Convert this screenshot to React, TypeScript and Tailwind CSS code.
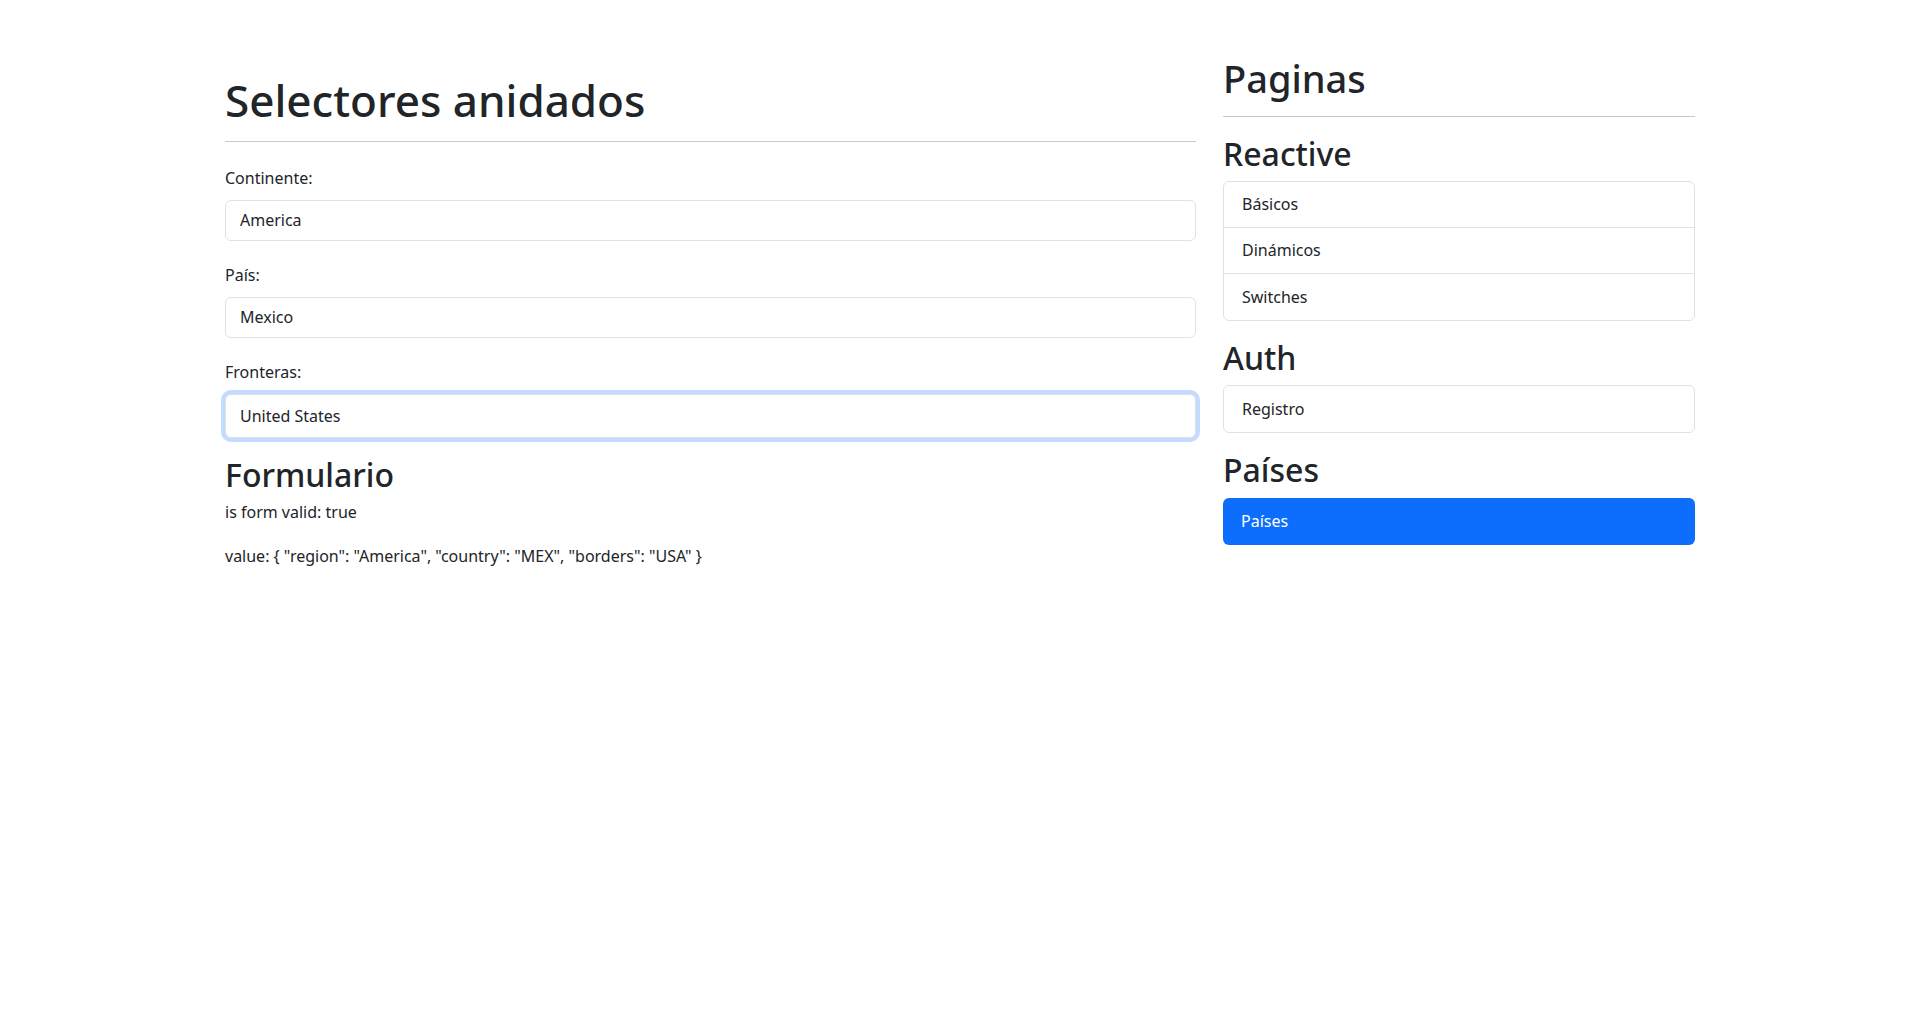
export default function App() {
  const inputCls =
    "w-full h-[41px] rounded-[6px] border border-[#dee2e6] px-[14px] text-[16px] text-[#212529] bg-white flex items-center";
  const item = "h-[46px] flex items-center px-[18px] text-[16px] text-[#212529] border-[#dee2e6]";
  return (
    <div className="min-h-[1032px] bg-white text-[#212529]" style={{ fontFamily: '"Noto Sans", "Open Sans", sans-serif' }}>
      <div className="mx-auto w-[1470px] pt-[56px] flex gap-[27px]">
        <div className="w-[971px]">
          <h1 className="text-[44px] leading-[1.2] font-medium mt-[18px]">Selectores anidados</h1>
          <hr className="mt-[14px] border-t border-[#c8c8c8]" />
          <div className="mt-[24px] text-[16px]">Continente:</div>
          <div className={inputCls + " mt-[10px]"}>America</div>
          <div className="mt-[22px] text-[16px]">País:</div>
          <div className={inputCls + " mt-[10px]"}>Mexico</div>
          <div className="mt-[22px] text-[16px]">Fronteras:</div>
          <div className={inputCls + " mt-[10px] h-[44px] border-[#86b7fe] shadow-[0_0_0_4px_rgba(13,110,253,0.25)]"}>United States</div>
          <h3 className="mt-[18px] text-[32px] leading-[1.2] font-medium">Formulario</h3>
          <p className="mt-[6px] text-[16px]">is form valid: true</p>
          <p className="mt-[20px] text-[16px]">value: {'{ "region": "America", "country": "MEX", "borders": "USA" }'}</p>
        </div>
        <div className="w-[472px]">
          <h2 className="text-[38px] leading-[1.2] font-medium">Paginas</h2>
          <hr className="mt-[14px] border-t border-[#c8c8c8]" />
          <h3 className="mt-[18px] text-[32px] leading-[1.2] font-medium">Reactive</h3>
          <div className="mt-[8px] rounded-[6px] border border-[#dee2e6]">
            <div className={item + " border-b"}>Básicos</div>
            <div className={item + " border-b"}>Dinámicos</div>
            <div className={item}>Switches</div>
          </div>
          <h3 className="mt-[18px] text-[32px] leading-[1.2] font-medium">Auth</h3>
          <div className="mt-[8px] rounded-[6px] border border-[#dee2e6]">
            <div className={item}>Registro</div>
          </div>
          <h3 className="mt-[18px] text-[32px] leading-[1.2] font-medium">Países</h3>
          <div className="mt-[8px] rounded-[6px] bg-[#0d6efd] h-[47px] flex items-center px-[18px] text-[16px] text-white">Países</div>
        </div>
      </div>
    </div>
  );
}
